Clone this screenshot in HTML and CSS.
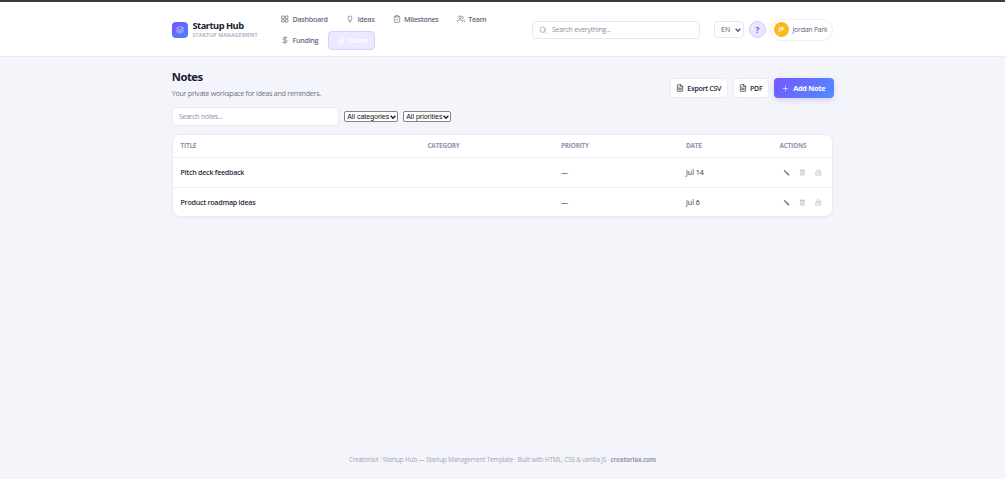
FILE: index.html
```html
<!DOCTYPE html>
<html lang="en">

<head>
    <meta charset="UTF-8">
    <meta name="viewport" content="width=device-width, initial-scale=1.0">
    <title>Notes - Startup Hub</title>
    <link rel="stylesheet" href="styles.css">
</head>

<body>
    <!-- shared icons -->
    <svg class="sprite" viewBox="0 0 24 24">
        <symbol id="file" viewBox="0 0 24 24">
            <path d="M14 2H6a2 2 0 0 0-2 2v16a2 2 0 0 0 2 2h12a2 2 0 0 0 2-2V8z M14 2v6h6 M8 13h8 M8 17h8 M8 9h2" />
        </symbol>
        <symbol id="edit" viewBox="0 0 24 24">
            <path d="M2 3l5 1 14 13 1 5-5-1L4 8z" fill="currentColor" stroke="none" />
        </symbol>
        <symbol id="trash" viewBox="0 0 24 24">
            <path d="M6 5h12v16H6z M5 4h14 M10 8v10 M14 8v10" />
        </symbol>
        <symbol id="lock" viewBox="0 0 24 24">
            <path d="M4 10h16v11H4z M7 10V7a5 5 0 0 1 10 0v3 M9 15h6" />
        </symbol>
    </svg>

    <header class="header">
        <div class="header-inner">
            <a class="brand">
                <span class="logo">
                    <svg class="icon" viewBox="0 0 24 24"><path d="M12 2L2 7l10 5 10-5z M2 12l10 5 10-5 M2 17l10 5 10-5" /></svg>
                </span>
                <span class="brand-text">
                    <span class="brand-name">Startup Hub</span>
                    <span class="brand-sub">STARTUP MANAGEMENT</span>
                </span>
            </a>

            <nav class="nav">
                <a class="nav-link">
                    <svg class="icon" viewBox="0 0 24 24"><path d="M3 3h7v7H3z M14 3h7v7h-7z M14 14h7v7h-7z M3 14h7v7H3z" /></svg>
                    <span>Dashboard</span>
                </a>
                <a class="nav-link">
                    <svg class="icon" viewBox="0 0 24 24"><path d="M9 16c0-2-3-3-3-7a6 6 0 0 1 12 0c0 4-3 5-3 7z M10 20h4" /></svg>
                    <span>Ideas</span>
                </a>
                <a class="nav-link">
                    <svg class="icon" viewBox="0 0 24 24"><path d="M8 4H6a2 2 0 0 0-2 2v14a2 2 0 0 0 2 2h12a2 2 0 0 0 2-2V6a2 2 0 0 0-2-2h-2 M8 2h8v4H8z M9 14l2 2 4-4" /></svg>
                    <span>Milestones</span>
                </a>
                <a class="nav-link">
                    <svg class="icon" viewBox="0 0 24 24"><path d="M17 21v-2a4 4 0 0 0-4-4H5a4 4 0 0 0-4 4v2 M9 3a4 4 0 1 0 0 8 4 4 0 0 0 0-8 M23 21v-2a4 4 0 0 0-3-3.9 M16 3.1a4 4 0 0 1 0 7.8" /></svg>
                    <span>Team</span>
                </a>
                <a class="nav-link">
                    <svg class="icon" viewBox="0 0 24 24"><path d="M12 1v22 M18 5H9.500a3.500 3.500 0 0 0 0 7h5a3.500 3.500 0 0 1 0 7H5" /></svg>
                    <span>Funding</span>
                </a>
                <a class="nav-link active">
                    <svg class="icon"><use href="#file" /></svg>
                    <span>Notes</span>
                </a>
            </nav>

            <label class="search">
                <svg class="icon" viewBox="0 0 24 24"><circle cx="11" cy="11" r="8" /><path d="M21 21l-4.300-4.300" /></svg>
                <input type="text" placeholder="Search everything...">
            </label>

            <div class="lang">
                <span>EN</span>
                <svg class="chevron" viewBox="0 0 10 6"><path d="M1 1l4 4 4-4" /></svg>
            </div>
            <button class="help">?</button>
            <div class="user">
                <span class="avatar">JP</span>
                <span>Jordan Park</span>
            </div>
        </div>
    </header>

    <main class="main">
        <div class="page-head">
            <div>
                <h1 class="title">Notes</h1>
                <p class="subtitle">Your private workspace for ideas and reminders.</p>
            </div>
            <div class="buttons">
                <button class="btn btn-csv"><svg class="icon"><use href="#file" /></svg><span>Export CSV</span></button>
                <button class="btn btn-pdf"><svg class="icon"><use href="#file" /></svg><span>PDF</span></button>
                <button class="btn btn-primary"><svg class="icon" viewBox="0 0 24 24"><path d="M12 4v16 M4 12h16" /></svg><span>Add Note</span></button>
            </div>
        </div>

        <div class="filters">
            <input class="filter-input" type="text" placeholder="Search notes...">
            <div class="select categories">
                <span>All categories</span>
                <svg class="chevron" viewBox="0 0 10 6"><path d="M1 1l4 4 4-4" /></svg>
            </div>
            <div class="select priorities">
                <span>All priorities</span>
                <svg class="chevron" viewBox="0 0 10 6"><path d="M1 1l4 4 4-4" /></svg>
            </div>
        </div>

        <div class="table">
            <div class="row row-head">
                <span>TITLE</span>
                <span>CATEGORY</span>
                <span>PRIORITY</span>
                <span>DATE</span>
                <span>ACTIONS</span>
            </div>
            <div class="row">
                <span class="note-title">Pitch deck feedback</span>
                <span></span>
                <span>—</span>
                <span>Jul 14</span>
                <span class="actions">
                    <svg class="icon edit"><use href="#edit" /></svg>
                    <svg class="icon"><use href="#trash" /></svg>
                    <svg class="icon"><use href="#lock" /></svg>
                </span>
            </div>
            <div class="row">
                <span class="note-title">Product roadmap ideas</span>
                <span></span>
                <span>—</span>
                <span>Jul 6</span>
                <span class="actions">
                    <svg class="icon edit"><use href="#edit" /></svg>
                    <svg class="icon"><use href="#trash" /></svg>
                    <svg class="icon"><use href="#lock" /></svg>
                </span>
            </div>
        </div>
    </main>

    <footer class="footer">CreatoriaX · Startup Hub — Startup Management Template · Built with HTML, CSS &amp; vanilla JS · <strong>creatoriax.com</strong></footer>
</body>

</html>
```
FILE: styles.css
```css
* {
    box-sizing: border-box;
}

body {
    margin: 0;
    height: 479px;
    display: flex;
    flex-direction: column;
    font-family: "Open Sans", "Noto Sans", sans-serif;
    font-size: 7px;
    color: #1c2033;
    background-color: #f4f5fa;
    overflow: hidden;
}

input,
button {
    font-family: inherit;
}

.sprite {
    display: none;
}

.icon {
    width: 8px;
    height: 8px;
    flex: none;
    fill: none;
    stroke: currentColor;
    stroke-width: 2;
    stroke-linecap: round;
    stroke-linejoin: round;
}

.chevron {
    width: 6px;
    height: 4px;
    flex: none;
    fill: none;
    stroke: currentColor;
    stroke-width: 2.2;
}

/* header */
.header {
    height: 57px;
    flex: none;
    background-color: #fff;
    border-top: 2px solid #3b3b3d;
    border-bottom: 1px solid #e9eaf3;
}

.header-inner {
    width: 661px;
    height: 55px;
    margin: 0 auto;
    display: flex;
    align-items: center;
}

.brand {
    display: flex;
    align-items: center;
    gap: 4.5px;
    width: 101px;
    flex: none;
}

.logo {
    width: 16px;
    height: 16px;
    flex: none;
    border-radius: 4px;
    display: flex;
    align-items: center;
    justify-content: center;
    color: #dcd8ff;
    background: linear-gradient(135deg, #7657ff, #4f80ff);
}

.brand-text {
    display: flex;
    flex-direction: column;
}

.brand-name {
    font-size: 9.3px;
    line-height: 11px;
    font-weight: 700;
    letter-spacing: -0.5px;
}

.brand-sub {
    font-size: 5.3px;
    line-height: 9px;
    font-weight: 600;
    letter-spacing: 0.16px;
    white-space: nowrap;
    color: #a0a3b8;
}

.nav {
    width: 237px;
    flex: none;
    display: flex;
    flex-wrap: wrap;
    gap: 2px;
}

.nav-link {
    height: 19px;
    padding: 0 7.2px;
    display: flex;
    align-items: center;
    gap: 3.4px;
    font-size: 7.2px;
    font-weight: 600;
    letter-spacing: -0.33px;
    color: #686b82;
    border: 1px solid transparent;
    border-radius: 4px;
}

.nav-link.active {
    color: #fff;
    background-color: #ede8ff;
    border-color: #d9d0ff;
}

.search {
    width: 168px;
    height: 18px;
    margin-left: 22px;
    padding: 0 6px;
    flex: none;
    display: flex;
    align-items: center;
    gap: 5px;
    color: #8e91a8;
    border: 1px solid #e6e8f1;
    border-radius: 4px;
}

.search input {
    width: 140px;
    padding: 0;
    border: 0;
    outline: 0;
    font-size: 7px;
    letter-spacing: -0.25px;
}

input::placeholder {
    color: #8b8e9f;
}

.lang {
    width: 30px;
    height: 17px;
    margin-left: 14px;
    padding: 0 2px 0 6px;
    flex: none;
    display: flex;
    align-items: center;
    justify-content: space-between;
    font-size: 7px;
    color: #55586d;
    border: 1px solid #e6e8f1;
    border-radius: 4px;
}

.help {
    width: 17px;
    height: 17px;
    margin-left: 5px;
    padding: 0;
    flex: none;
    font-size: 8px;
    font-weight: 700;
    color: #6c4df5;
    background-color: #ebe5ff;
    border: 1px solid #d5cbff;
    border-radius: 50%;
}

.user {
    width: 63px;
    height: 22px;
    margin-left: 4px;
    padding-left: 3px;
    display: flex;
    align-items: center;
    gap: 3.5px;
    flex: none;
    white-space: nowrap;
    font-size: 7px;
    letter-spacing: -0.26px;
    color: #62657c;
    border: 1px solid #eceef5;
    border-radius: 11px;
}

.avatar {
    width: 15px;
    height: 15px;
    flex: none;
    border-radius: 50%;
    background-color: #fcb91f;
    color: #fff;
    font-size: 5.5px;
    font-weight: 700;
    line-height: 15px;
    text-align: center;
}

/* page */
.main {
    width: 661.6px;
    margin: 0 auto;
    padding-top: 12px;
    flex: 1;
}

.page-head {
    height: 38px;
    display: flex;
    justify-content: space-between;
}

.title {
    margin: 0;
    font-size: 11.3px;
    line-height: 15px;
    font-weight: 700;
    letter-spacing: -0.5px;
}

.subtitle {
    margin: 3px 0 0;
    font-size: 7.2px;
    line-height: 13px;
    letter-spacing: -0.29px;
    color: #6f7289;
}

.buttons {
    display: flex;
    gap: 5px;
    padding-top: 9px;
    margin-right: -0.4px;
}

.btn {
    height: 20px;
    padding: 0;
    display: flex;
    align-items: center;
    justify-content: center;
    gap: 3px;
    font-size: 7.1px;
    font-weight: 600;
    letter-spacing: -0.34px;
    white-space: nowrap;
    color: #252a3b;
    background-color: #fff;
    border: 1px solid #eaebf3;
    border-radius: 4px;
}

.btn-csv {
    width: 58px;
}

.btn-pdf {
    width: 36px;
}

.btn-primary {
    width: 60px;
    gap: 4px;
    font-size: 7.3px;
    font-weight: 700;
    letter-spacing: -0.25px;
    color: #fff;
    border: 0;
    background: linear-gradient(135deg, #7657ff, #4f8cff);
    box-shadow: 0 2px 6px rgba(108, 92, 255, 0.25);
}

.btn-primary .icon {
    width: 7px;
    height: 7px;
}

.filters {
    height: 19px;
    display: flex;
    align-items: center;
    gap: 5px;
}

.filter-input {
    width: 167.500px;
    height: 19px;
    padding: 0 6px;
    font-size: 7px;
    letter-spacing: -0.25px;
    background-color: #fff;
    border: 1px solid #e9eaf3;
    border-radius: 4px;
}

.select {
    height: 11px;
    padding: 0 1px 0 2px;
    display: flex;
    align-items: center;
    justify-content: space-between;
    font-family: "Liberation Sans", Arial, sans-serif;
    font-size: 7px;
    white-space: nowrap;
    color: #111;
    background-color: #fff;
    border: 1px solid #858585;
    border-radius: 2px;
}

.categories {
    width: 54px;
}

.priorities {
    width: 48px;
}

.table {
    height: 83px;
    margin-top: 8px;
    background-color: #fff;
    border: 1px solid #e9eaf2;
    border-radius: 8px;
    box-shadow: 0 1px 3px rgba(30, 30, 80, 0.03);
}

.row {
    height: 29px;
    padding-left: 7.8px;
    display: grid;
    grid-template-columns: 247px 133.500px 125px 93.500px 1fr;
    align-items: center;
    font-size: 7.1px;
    line-height: 10px;
    letter-spacing: -0.06px;
    color: #2b2e40;
}

.row + .row {
    border-top: 1px solid #eceef4;
    height: 30px;
}

.row span {
    margin-top: -1px;
}

.row .actions {
    margin-top: 0;
}

.row-head {
    height: 22px;
    font-size: 6.4px;
    font-weight: 700;
    letter-spacing: -0.2px;
    color: #9294aa;
}

.note-title {
    font-weight: 600;
    letter-spacing: -0.24px;
}

.actions {
    display: flex;
    gap: 9px;
    padding-left: 3.5px;
    color: #b0b2c2;
}

.actions .icon {
    width: 7px;
    height: 7px;
}

.actions .edit {
    color: #74778a;
}

.footer {
    height: 27px;
    flex: none;
    text-align: center;
    font-size: 6.3px;
    line-height: 15px;
    letter-spacing: -0.16px;
    color: #a2a4b7;
}

.footer strong {
    font-weight: 700;
    color: #9698ad;
}
```
